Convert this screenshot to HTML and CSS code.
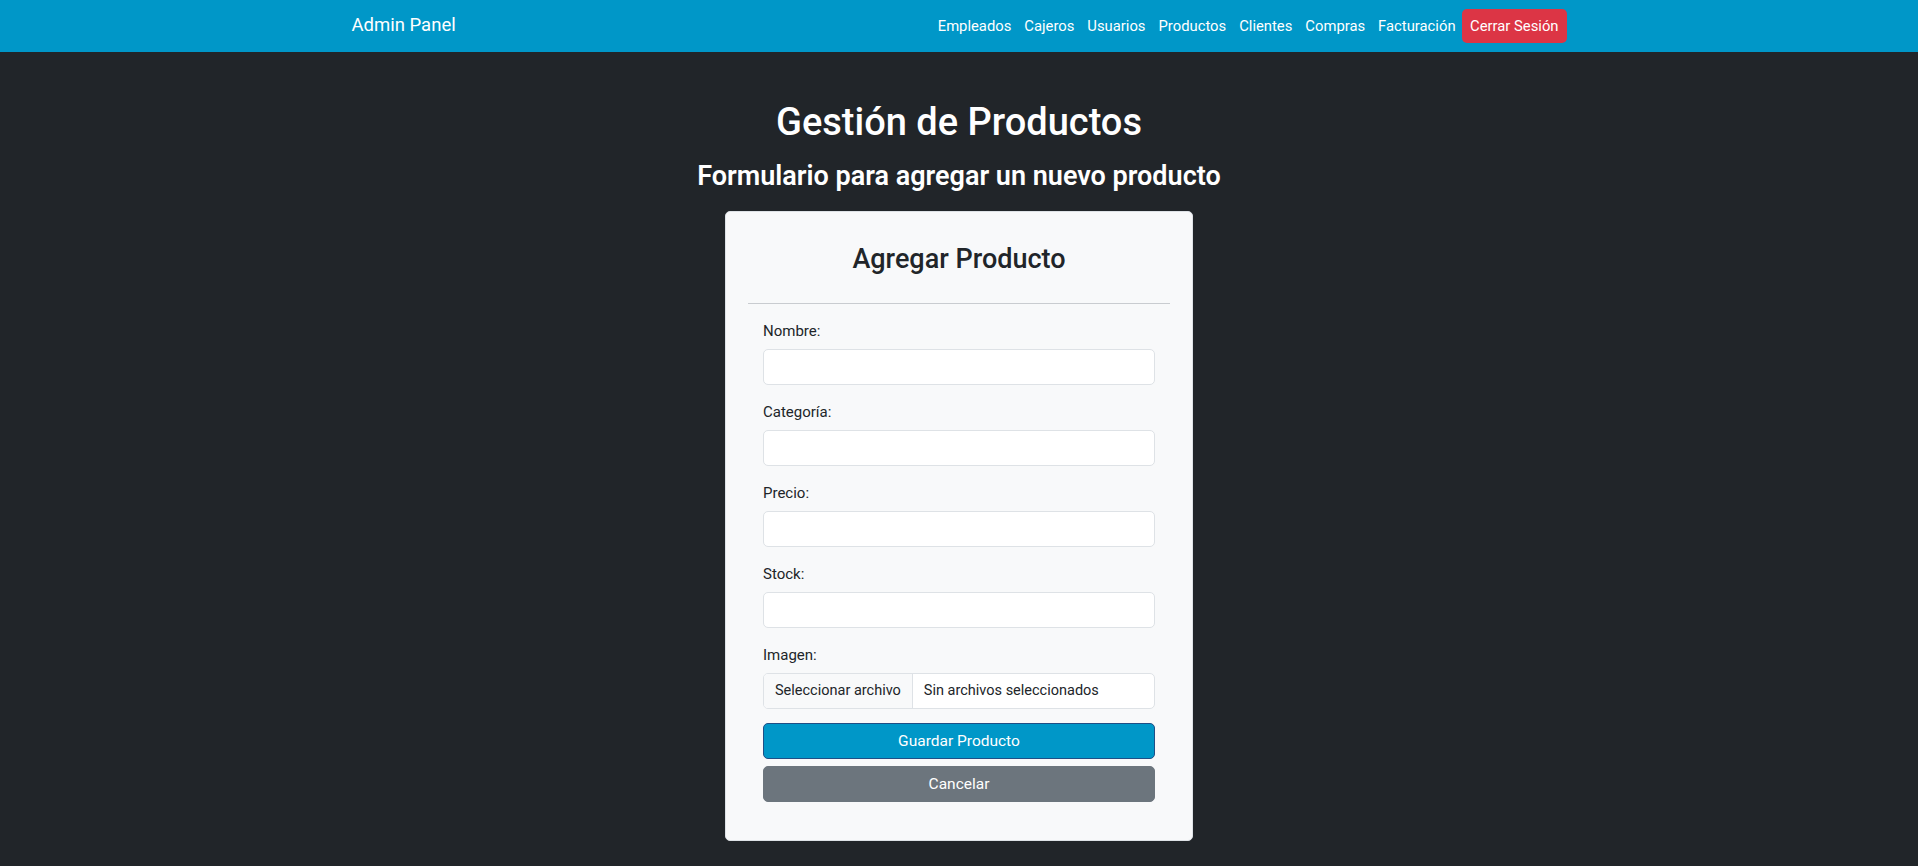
FILE: index.html
```html
<!DOCTYPE html>
<html lang="es">
    <head>
        <meta charset="utf-8"/>
        <meta name="viewport" content="width=device-width, initial-scale=1.0" />
        <title>Gestión de Productos</title>
        <link rel="stylesheet" href="styles.css">
    </head>

    <body>
        <!-- barra de navegacion -->
        <nav class="navbar">
            <div class="nav-inner">
                <a class="brand" href="#">Admin Panel</a>
                <ul class="nav-links">
                    <li><a href="#">Empleados</a></li>
                    <li><a href="#">Cajeros</a></li>
                    <li><a href="#">Usuarios</a></li>
                    <li><a href="#">Productos</a></li>
                    <li><a href="#">Clientes</a></li>
                    <li><a href="#">Compras</a></li>
                    <li><a href="#">Facturación</a></li>
                    <li><a class="btn-logout" href="#">Cerrar Sesión</a></li>
                </ul>
            </div>
        </nav>

        <main class="page">
            <h1 class="page-title">Gestión de Productos</h1>
            <h3 class="page-sub">Formulario para agregar un nuevo producto</h3>

            <div class="card">
                <h2 class="card-title">Agregar Producto</h2>
                <hr class="card-rule">
                <form class="product-form">
                    <div class="field">
                        <label for="nombre">Nombre:</label>
                        <input type="text" id="nombre" name="nombre">
                    </div>
                    <div class="field">
                        <label for="categoria">Categoría:</label>
                        <input type="text" id="categoria" name="categoria">
                    </div>
                    <div class="field">
                        <label for="precio">Precio:</label>
                        <input type="text" id="precio" name="precio">
                    </div>
                    <div class="field">
                        <label for="stock">Stock:</label>
                        <input type="text" id="stock" name="stock">
                    </div>
                    <div class="field">
                        <label>Imagen:</label>
                        <div class="file-box">
                            <span class="file-btn">Seleccionar archivo</span>
                            <span class="file-name">Sin archivos seleccionados</span>
                        </div>
                    </div>
                    <button type="button" class="btn btn-save">Guardar Producto</button>
                    <button type="button" class="btn btn-cancel">Cancelar</button>
                </form>
            </div>
        </main>
    </body>
</html>
```

FILE: styles.css
```css
body {
    margin: 0;
    background: #212529;
    font-family: Roboto, "Noto Sans", sans-serif;
    font-size: 16px;
    line-height: 1.5;
    color: #212529;
}

/* navbar */
.navbar {
    background: #0097c8;
    height: 52px;
}
.nav-inner {
    width: 1215px;
    margin: 0 auto;
    height: 52px;
    display: flex;
    align-items: center;
    justify-content: space-between;
}
.brand {
    color: #fff;
    font-size: 18.5px;
    text-decoration: none;
}
.nav-links {
    list-style: none;
    margin: 0;
    padding: 0;
    display: flex;
    align-items: center;
    font-size: 14.8px;
}
.nav-links a {
    display: block;
    color: #fff;
    text-decoration: none;
    padding: 6px 6.5px;
}
.nav-links .btn-logout {
    background: #dc3545;
    border-radius: 5px;
    padding: 6px 8px;
    margin-left: 0;
}

/* contenido */
.page {
    text-align: center;
    padding-top: 48px;
}
.page-title {
    color: #fff;
    font-size: 38px;
    font-weight: 500;
    line-height: 1.2;
    margin: 0 0 14px;
}
.page-sub {
    color: #fff;
    font-size: 27px;
    font-weight: 600;
    line-height: 1.2;
    margin: 0 0 19px;
}

.card {
    box-sizing: border-box;
    width: 468px;
    margin: 0 auto 30px;
    background: #f8f9fa;
    border: 1px solid #dee2e6;
    border-radius: 5px;
    padding: 23px 22px 23px;
    text-align: left;
}
.card-title {
    font-size: 27px;
    font-weight: 500;
    line-height: 1.2;
    text-align: center;
    margin: 8px 0 0;
}
.card-rule {
    border: 0;
    border-top: 1px solid #c9ccd0;
    margin: 28px 0 15px;
}

.product-form {
    padding: 0 15px 15px;
}
.field {
    margin-bottom: 15px;
}
.field label {
    display: block;
    font-size: 15px;
    line-height: 24px;
    margin-bottom: 6px;
}
.field input {
    display: block;
    box-sizing: border-box;
    width: 100%;
    height: 36px;
    border: 1px solid #dee2e6;
    border-radius: 5px;
    background: #fff;
    font: inherit;
    padding: 0 12px;
}
.file-box {
    display: flex;
    height: 36px;
    box-sizing: border-box;
    border: 1px solid #dee2e6;
    border-radius: 5px;
    background: #fff;
    overflow: hidden;
    font-size: 14.5px;
}
.file-btn {
    background: #f8f9fa;
    border-right: 1px solid #dee2e6;
    padding: 0 11px 0 11px;
    line-height: 34px;
}
.file-name {
    padding: 0 11px;
    line-height: 34px;
}

.btn {
    display: block;
    width: 100%;
    height: 36px;
    border-radius: 5px;
    font: inherit;
    font-size: 15.5px;
    color: #fff;
    cursor: pointer;
}
.btn-save {
    background: #0097c8;
    border: 1px solid #1f4f86;
    margin-top: -1px;
}
.btn-cancel {
    background: #6c757d;
    border: 1px solid #6c757d;
    margin-top: 7px;
}
```
